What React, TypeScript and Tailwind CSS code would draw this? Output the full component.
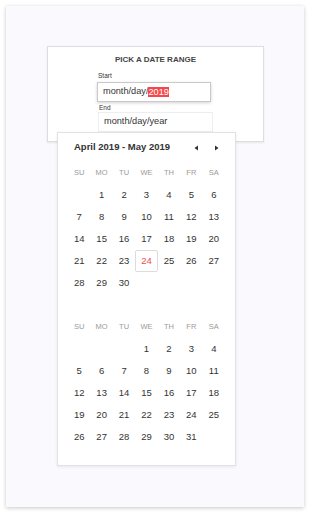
import React from "react";

const WEEK = ["SU", "MO", "TU", "WE", "TH", "FR", "SA"];

function Month({ offset, days, highlight }: { offset: number; days: number; highlight?: number }) {
  const cells: (number | null)[] = [];
  for (let i = 0; i < offset; i++) cells.push(null);
  for (let d = 1; d <= days; d++) cells.push(d);
  return (
    <div className="grid w-[157px] grid-cols-7">
      {WEEK.map((w) => (
        <div key={w} className="flex h-[22px] items-center justify-center text-[7.5px] text-[#9a9a9a]">
          {w}
        </div>
      ))}
      {cells.map((d, i) =>
        d === null ? (
          <div key={"e" + i} className="h-[22px]" />
        ) : d === highlight ? (
          <div
            key={d}
            className="flex h-[22px] items-center justify-center rounded-[2px] border-[1.5px] border-[#dcdcdc] text-[9.5px] text-[#f44a4a]"
          >
            {d}
          </div>
        ) : (
          <div key={d} className="flex h-[22px] items-center justify-center text-[9.5px] text-[#333]">
            {d}
          </div>
        )
      )}
    </div>
  );
}

export default function App() {
  return (
    <div
      className="min-h-[521px] bg-white p-[6px]"
      style={{ fontFamily: '"Liberation Sans", Arial, sans-serif' }}
    >
      <div className="relative h-[501px] w-[298px] bg-[#f9f9fe] pt-[40px] shadow-[0_1px_4px_rgba(0,0,0,0.22)]">
        <div className="ml-[41px] h-[96px] w-[217px] border border-[#dedede] bg-white shadow-[0_1px_2px_rgba(0,0,0,0.08)]">
          <div className="pt-[8px] text-center text-[8px] font-bold leading-[10px] text-[#444]">
            PICK A DATE RANGE
          </div>
          <div className="ml-[49px] mt-[7px]">
            <div className="ml-[1px] text-[6.5px] leading-[8px] text-[#333]">Start</div>
            <div className="mt-[2px] flex h-[20px] w-[114px] items-center border border-[#c9c9c9] px-[5px] text-[9.2px] text-[#333] shadow-[0_1px_3px_rgba(0,0,0,0.18)]">
              <span>month/day/</span>
              <span className="bg-[#f5474a] leading-[10px] text-white">2019</span>
            </div>
            <div className="ml-[2px] mt-[2px] text-[6.5px] leading-[8px] text-[#333]">End</div>
            <div className="ml-[1px] flex h-[20px] w-[115px] items-center border border-[#eeeeee] px-[5px] text-[9.2px] text-[#333]">
              month/day/year
            </div>
          </div>
        </div>

        <div className="absolute left-[51px] top-[126px] h-[334px] w-[179px] border border-[#e2e2e2] bg-white shadow-[0_1px_3px_rgba(0,0,0,0.08)]">
          <div className="flex h-[29px] items-center pl-[16px] pr-[16px]">
            <span className="text-[9.5px] font-bold text-[#333]">April 2019 - May 2019</span>
            <div className="ml-auto flex items-center gap-[15px]">
              <svg width="5" height="6" viewBox="0 0 5 6">
                <path d="M4 0.5 L0.5 3 L4 5.5 Z" fill="#333" />
              </svg>
              <svg width="5" height="6" viewBox="0 0 5 6">
                <path d="M1 0.5 L4.5 3 L1 5.5 Z" fill="#333" />
              </svg>
            </div>
          </div>
          <div className="ml-[10px]">
            <div className="h-[154px]">
              <Month offset={1} days={30} highlight={24} />
            </div>
            <Month offset={3} days={31} />
          </div>
        </div>
      </div>
    </div>
  );
}
